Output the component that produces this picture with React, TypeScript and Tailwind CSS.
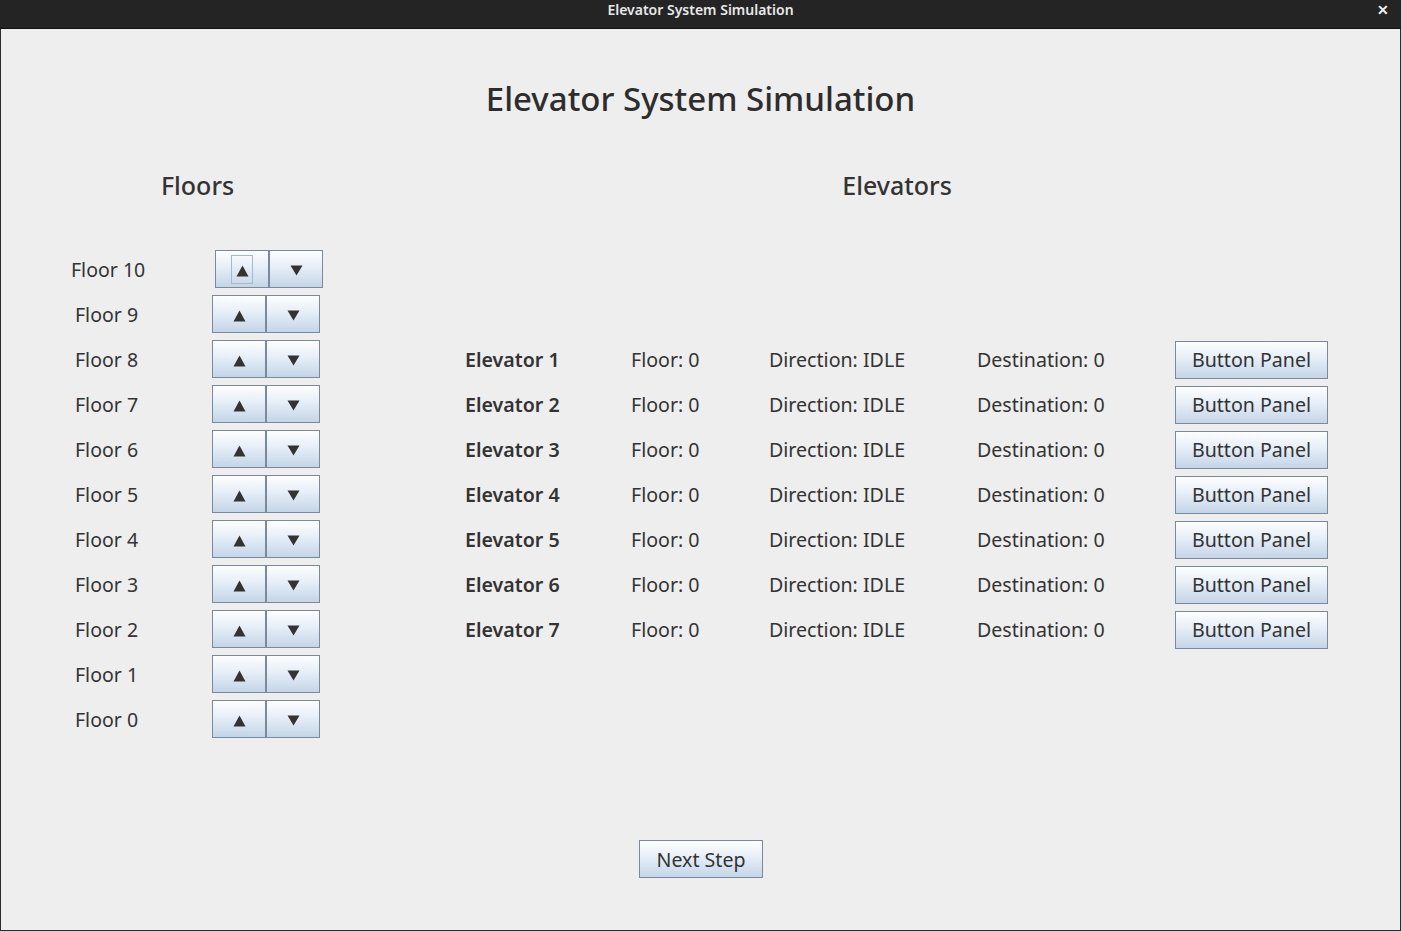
import React from "react";

const FLOORS = [10, 9, 8, 7, 6, 5, 4, 3, 2, 1, 0];
const ELEVATORS = [1, 2, 3, 4, 5, 6, 7];

const btn =
  "border border-[#7a8a9c] bg-[linear-gradient(to_bottom,#fdfeff_0%,#e6eef7_45%,#c4d5e8_100%)] text-[#333] flex items-center justify-center";

function UpArrow() {
  return (
    <svg width="13" height="12" viewBox="0 0 13 12" className="mt-[3px]">
      <path d="M6.5 0.5L12.5 11.5H0.5z" fill="#333" />
    </svg>
  );
}

function DownArrow() {
  return (
    <svg width="13" height="11" viewBox="0 0 13 11" className="mt-[2px]">
      <path d="M0.5 0.5H12.5L6.5 10.5z" fill="#333" />
    </svg>
  );
}

function CallButtons({ focused }: { focused?: boolean }) {
  return (
    <div className="flex h-[38px] w-[108px]">
      <button className={`${btn} w-[54px] h-full`}>
        {focused ? (
          <span className="flex items-center justify-center w-[22px] h-[29px] border border-[#a3b8d1]">
            <UpArrow />
          </span>
        ) : (
          <UpArrow />
        )}
      </button>
      <button className={`${btn} w-[54px] h-full`}>
        <DownArrow />
      </button>
    </div>
  );
}

export default function App() {
  return (
    <div
      className="w-[1401px] h-[931px] flex flex-col bg-[#eeeeee] text-[#333]"
      style={{ fontFamily: '"Noto Sans", "Open Sans", sans-serif' }}
    >
      {/* Title bar */}
      <div className="h-[29px] shrink-0 bg-[#242424] border-b border-[#111] flex items-center justify-center relative">
        <span className="text-[14px] font-semibold text-[#e8e8e8] -mt-[9px] leading-[20px]">
          Elevator System Simulation
        </span>
        <span className="absolute right-[12px] top-[1px] text-[#eee] text-[14px] font-bold leading-[18px]">
          ✕
        </span>
      </div>

      <div className="flex-1 flex flex-col border-x border-b border-[#2b2b2b]">
        <h1 className="mt-[47px] h-[45px] leading-[45px] text-center text-[33px] font-medium text-[#2d2d2d]">
          Elevator System Simulation
        </h1>

        <div className="flex mt-[47px]">
          {/* Floors */}
          <div className="w-[393px] flex flex-col">
            <h2 className="h-[36px] leading-[35px] text-center text-[25px] font-medium">Floors</h2>
            <div className="mt-[46px] flex flex-col gap-[7px]">
              {FLOORS.map((f) => (
                <div
                  key={f}
                  className={`flex items-center h-[38px] ${f === 10 ? "pl-[70px]" : "pl-[74px]"}`}
                >
                  <span
                    className={`text-[19.5px] pt-[2px] ${f === 10 ? "w-[144px]" : "w-[137px]"}`}
                  >
                    Floor {f}
                  </span>
                  <CallButtons focused={f === 10} />
                </div>
              ))}
            </div>
          </div>

          {/* Elevators */}
          <div className="flex-1 flex flex-col">
            <h2 className="h-[36px] leading-[35px] text-center text-[25px] font-medium">Elevators</h2>
            <div className="mt-[137px] flex flex-col gap-[7px]">
              {ELEVATORS.map((e) => (
                <div key={e} className="flex items-center h-[38px] text-[19.6px] pl-[71px]">
                  <span className="w-[166px] font-semibold">Elevator {e}</span>
                  <span className="w-[138px]">Floor: 0</span>
                  <span className="w-[208px]">Direction: IDLE</span>
                  <span className="w-[198px]">Destination: 0</span>
                  <button className={`${btn} w-[153px] h-[38px] text-[19.6px]`}>Button Panel</button>
                </div>
              ))}
            </div>
          </div>
        </div>

        <div className="flex justify-center mt-[102px] pl-[1px]">
          <button className={`${btn} w-[124px] h-[38px] text-[19.6px] pt-[1px]`}>Next Step</button>
        </div>
      </div>
    </div>
  );
}
